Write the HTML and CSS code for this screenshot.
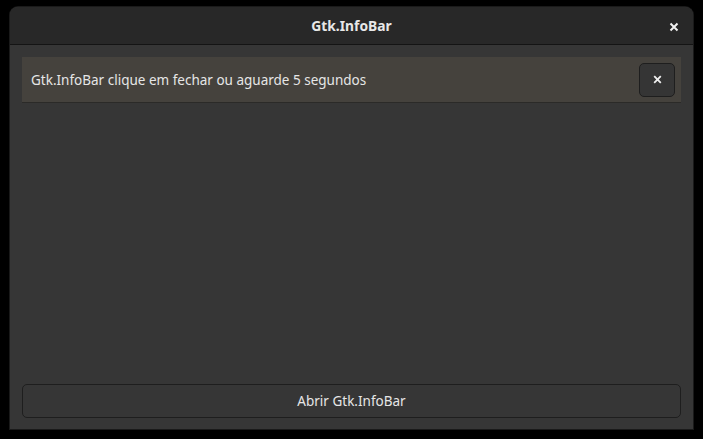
FILE: index.html
```html
<!DOCTYPE html>
<html>
<head>
<meta charset="utf-8">
<link rel="stylesheet" href="styles.css">
</head>
<body>
<div class="window">
  <header class="titlebar">
    <span class="title">Gtk.InfoBar</span>
    <button class="wm-close" aria-label="Fechar">
      <svg width="10" height="10" viewBox="0 0 10 10"><path d="M1.5 1.5 L8.5 8.5 M8.5 1.5 L1.5 8.5" stroke="#f2f2f2" stroke-width="2" stroke-linecap="butt"/></svg>
    </button>
  </header>
  <main class="content">
    <div class="infobar">
      <span class="info-text">Gtk.InfoBar clique em fechar ou aguarde 5 segundos</span>
      <button class="info-close" aria-label="Fechar">
        <svg width="9" height="9" viewBox="0 0 9 9"><path d="M1.2 1.2 L7.8 7.8 M7.8 1.2 L1.2 7.8" stroke="#f0f0f0" stroke-width="1.8"/></svg>
      </button>
    </div>
    <div class="spacer"></div>
    <button class="open-btn">Abrir Gtk.InfoBar</button>
  </main>
</div>
</body>
</html>
```
FILE: styles.css
```css
html, body {
  margin: 0;
  padding: 0;
  background: #000;
  width: 703px;
  height: 439px;
  overflow: hidden;
}
body {
  padding: 7px 10px 10px 10px;
  box-sizing: border-box;
  font-family: "Noto Sans", "Open Sans", sans-serif;
}
.window {
  width: 683px;
  height: 422px;
  display: flex;
  flex-direction: column;
  background: #363636;
  border-radius: 8px 8px 0 0;
  overflow: hidden;
  box-shadow: 0 0 0 1px #1a1a1a;
}
.titlebar {
  height: 37px;
  flex: none;
  background: #282828;
  border-bottom: 1px solid #141414;
  display: flex;
  align-items: center;
  justify-content: center;
  position: relative;
}
.title {
  color: #e8e8e8;
  font-weight: 700;
  font-size: 13.8px;
}
.wm-close {
  position: absolute;
  right: 13px;
  top: 14px;
  width: 12px;
  height: 12px;
  padding: 0;
  margin: 0;
  border: none;
  background: none;
  display: flex;
  align-items: center;
  justify-content: center;
}
.content {
  flex: 1;
  display: flex;
  flex-direction: column;
  padding: 12px 12px 11px 12px;
}
.infobar {
  height: 46px;
  box-sizing: border-box;
  background: #45423d;
  border-bottom: 1px solid #2b2a28;
  display: flex;
  align-items: center;
  padding: 0 6px 0 9px;
}
.info-text {
  flex: 1;
  color: #e6e6e6;
  font-size: 13.5px;
}
.info-close {
  width: 36px;
  height: 34px;
  box-sizing: border-box;
  border: 1px solid #1e1e1e;
  border-radius: 5px;
  background: #353535;
  padding: 0;
  display: flex;
  align-items: center;
  justify-content: center;
}
.spacer { flex: 1; }
.open-btn {
  height: 34px;
  box-sizing: border-box;
  border: 1px solid #1e1e1e;
  border-radius: 5px;
  background: #363636;
  color: #e6e6e6;
  font-family: "Noto Sans", "Open Sans", sans-serif;
  font-size: 13.5px;
  padding: 0;
}
```
